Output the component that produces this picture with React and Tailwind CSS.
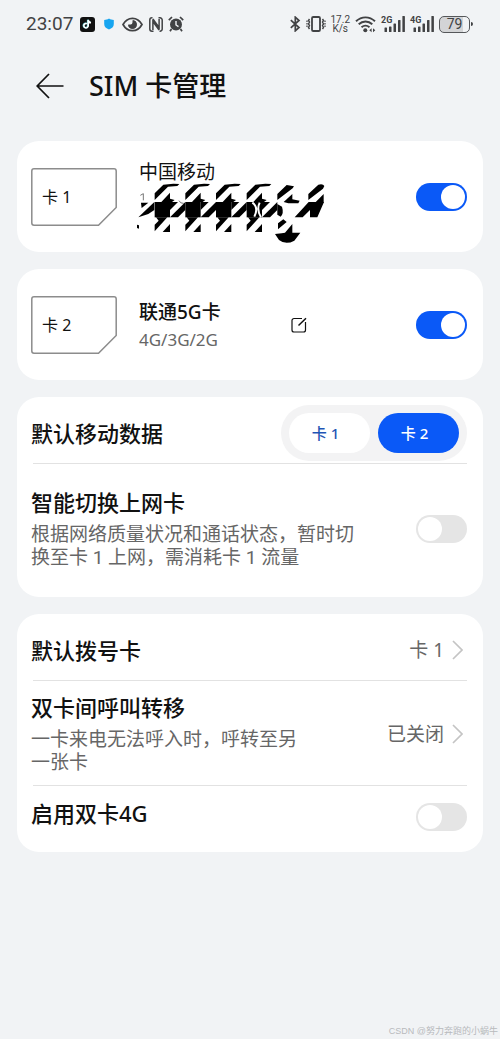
import React, { useState } from "react";

function Switch({ id, defaultChecked }) {
  return (
    <input
      id={id}
      type="checkbox"
      role="switch"
      defaultChecked={defaultChecked}
      className="block h-7 w-[51px] shrink-0 cursor-pointer appearance-none rounded-full bg-[#e5e5e5] p-[2px] before:block before:size-6 before:rounded-full before:bg-white checked:bg-[#0a59f7] checked:pl-[25px]"
    />
  );
}

function TikTokIcon() {
  return (
    <svg width="15" height="15" viewBox="0 0 15 15" aria-hidden="true">
      <rect width="15" height="15" rx="3" fill="#111" />
      <path d="M6.900 6.700A2.200 2.200 0 1 0 8.200 9.200V3c.3 1.500 1.300 2.500 2.800 2.700" fill="none" stroke="#5fd6dc" strokeWidth="1.600" transform="translate(-.5 -.3)" />
      <path d="M6.900 6.700A2.200 2.200 0 1 0 8.200 9.200V3c.3 1.500 1.300 2.500 2.800 2.700" fill="none" stroke="#fff" strokeWidth="1.600" />
    </svg>
  );
}

function ShieldIcon() {
  return (
    <svg width="10" height="12" viewBox="0 0 10 12" aria-hidden="true">
      <path d="M5 0.500C6.500 1.500 8 1.900 9.800 2v4C9.800 8.800 7.800 10.500 5 11.500 2.200 10.500.2 8.800.2 6V2C2 1.900 3.500 1.500 5 .5z" fill="#18a5f0" />
    </svg>
  );
}

function EyeIcon() {
  return (
    <svg width="21" height="15" viewBox="0 0 21 15" aria-hidden="true">
      <path d="M1 7.500C3.200 3.500 6.500 1.300 10.500 1.300s7.300 2.200 9.500 6.200c-2.200 4-5.500 6.200-9.500 6.200S3.200 11.500 1 7.500z" fill="none" stroke="#414244" strokeWidth="1.700" />
      <path d="M11 3.200a4.300 4.300 0 1 1-4.800 4.800l1.500.2a3 3 0 0 0 3.300-3.400z" fill="#414244" />
      <path d="M10.500 3.200a4.300 4.300 0 1 1-4.300 4.300h2.500a2 2 0 0 0 1.800-2z" fill="#414244" />
    </svg>
  );
}

function NfcIcon() {
  return (
    <svg width="14" height="15" viewBox="0 0 14 15" fill="none" stroke="#414244" aria-hidden="true">
      <path d="M3.500.8H3A2.200 2.200 0 0 0 .8 3v9A2.200 2.200 0 0 0 3 14.200h1.500M10.500 14.200h.5a2.200 2.200 0 0 0 2.200-2.200V3A2.200 2.200 0 0 0 11 .8H9.500" strokeWidth="1.500" />
      <path d="M3.900 13V4.500l6.200 8.500M10.100 2v8.500L3.900 2" strokeWidth="1.500" />
    </svg>
  );
}

function AlarmIcon() {
  return (
    <svg width="16" height="16" viewBox="0 0 16 16" aria-hidden="true">
      <circle cx="8" cy="8.500" r="6" fill="#414244" />
      <path d="M.8 4.200L4 1M15.200 4.200L12 1M3.500 13l-1.500 2.300M12.500 13l1.500 2.300" stroke="#414244" strokeWidth="1.700" />
      <path d="M8 5v4l2.500 1.700" fill="none" stroke="#f1f3f5" strokeWidth="1.400" />
    </svg>
  );
}

function BluetoothIcon() {
  return (
    <svg width="11" height="16" viewBox="0 0 11 16" fill="none" stroke="#414244" strokeWidth="1.700" aria-hidden="true">
      <path d="M.8 4.200l8.200 7.300-3.700 3.300V1.200L9 4.500.8 11.800" />
    </svg>
  );
}

function VibrateIcon() {
  return (
    <svg width="20" height="16" viewBox="0 0 20 16" fill="none" stroke="#414244" aria-hidden="true">
      <rect x="6" y="1" width="8" height="14" rx="1.300" strokeWidth="1.800" />
      <path d="M3.500 3l-1 1.500 1 1.500-1 2 1 1.500-1 2 1 1.500M16.500 3l1 1.500-1 1.500 1 2-1 1.500 1 2-1 1.500" strokeWidth="1.400" />
      <path d="M1 4.500v7M19 4.500v7" strokeWidth="1.200" strokeDasharray="1.500 1" />
    </svg>
  );
}

function WifiIcon() {
  return (
    <svg width="21" height="17" viewBox="0 0 21 17" fill="none" stroke="#414244" strokeWidth="1.900" aria-hidden="true">
      <path d="M1 5.300c5.500-5.300 13.500-5.300 19 0M3.700 8.300c4-3.700 9.600-3.700 13.600 0M6.500 11.300c2.500-2.100 5.500-2.100 8 0" />
      <circle cx="10.300" cy="14.300" r="2" fill="#414244" stroke="none" />
      <path d="M14.300 14.200l2.300-2v4zM20.300 14.200l-2.300-2v4z" fill="#414244" stroke="none" />
    </svg>
  );
}

function Signal({ label }) {
  return (
    <span className="relative block">
      <svg width="24" height="16" viewBox="0 0 24 16" fill="#414244" aria-hidden="true">
        <rect x="3.500" y="11.500" width="2.500" height="4.500" rx=".6" />
        <rect x="8" y="10.500" width="2.500" height="5.500" rx=".6" />
        <rect x="12.500" y="7.500" width="2.500" height="8.500" rx=".6" />
        <rect x="17" y="4" width="2.500" height="12" rx=".6" />
        <rect x="21.400" y="0" width="2.500" height="16" rx=".6" />
      </svg>
      <span className="absolute top-0 left-0 text-[9px] leading-[9px] font-bold">{label}</span>
    </span>
  );
}

function Battery() {
  return (
    <span className="flex items-center gap-px">
      <span className="flex h-[17px] w-[31px] items-center justify-center rounded-[5px] border border-[#55575a] bg-linear-to-r from-[#d3d4d6] from-78% to-[#f1f3f5] to-78% text-[14px] leading-[15px]">
        79
      </span>
      <span className="h-1 w-[2px] rounded-r-full bg-[#414244]" />
    </span>
  );
}

function SimOutline({ label }) {
  return (
    <div className="grid h-[58px] w-[86px] shrink-0 items-center">
      <svg className="col-start-1 row-start-1" width="86" height="58" viewBox="0 0 86 58" fill="none" aria-hidden="true">
        <path d="M3 .8h80a2.200 2.200 0 0 1 2.200 2.200v36.500L67.500 57.200H3A2.200 2.200 0 0 1 .8 55V3A2.200 2.200 0 0 1 3 .8z" stroke="#8c8c8c" strokeWidth="1.500" />
      </svg>
      <span className="col-start-1 row-start-1 pl-[11px] text-[16px] leading-5">{label}</span>
    </div>
  );
}

/* Houndstooth brush covering the phone number. */
function NumberMask() {
  const tiles = [75, 167, 259, 351];
  return (
    <svg width="190" height="62" viewBox="22 22 570 186" fill="#000" role="img" aria-label="号码已隐藏">
      <path d="M32 62l9-5v20M148 78q4 9 14 8M187 86l8-10" fill="none" stroke="#777" strokeWidth="3" />
      <path d="M22 150l6 2v10l-6-2z" />
      <path d="M34 84h22L36 100z" />
      <path d="M26 128L74 82v24l-18 12-30 10z" />
      {tiles.map((x) => (
        <g key={x} transform={`translate(${x} 0)`}>
          <path d="M0 76V56L26 30 56 27 74 28 68 34 40 36z" />
          <path d="M20 82L46 54v18l14 4-8 6z" />
          <path d="M0 82h46v46H0z" />
          <path d="M46 82h24L46 106z" />
          <path d="M46 128L92 82v24L70 128z" />
          <path d="M4 128h34L0 170V150l12-12z" />
          <path d="M24 172l22-24v24z" />
        </g>
      ))}
      <path d="M368 84q20 14 6 42M390 84q-10 20 4 44" fill="none" stroke="#fff" strokeWidth="6" />
      <path d="M443 76V58l28-27 22 4-4 6zM462 82l26-24v16l22 4-4 8h-30z" />
      <path d="M443 88l14 8q6 20-4 30l-10-6z" />
      <path d="M536 76V58l30-28q14-4 18 4l-4 8zM556 84l26-26v26z" />
      <path d="M495 128l42-46h46l-20 46h-22V106l-22 22z" />
      <path d="M445 164v-18l16-12 10 8zM466 174l22-26v26h24l-18 24q-26 14-46-2l-12-18 20-2z" />
    </svg>
  );
}

function Chevron() {
  return (
    <svg width="11" height="20" viewBox="0 0 11 20" fill="none" stroke="#c4c4c4" strokeWidth="1.700" aria-hidden="true">
      <path d="M1 1l9 9-9 9" />
    </svg>
  );
}

function Card({ children }) {
  return <section className="rounded-[22px] bg-white pr-4 pl-[14px]">{children}</section>;
}

function Divider() {
  return <hr className="ml-[2px] border-t border-[#e2e2e2]" />;
}

export default function App() {
  const [dataCard, setDataCard] = useState(2);
  return (
    <div className="flex min-h-screen flex-col bg-[#f1f3f5] font-['Noto_Sans','Noto_Sans_CJK_SC',sans-serif] text-[#111]">
      <div className="flex h-12 items-center justify-between pr-[27px] pl-[26px] font-[Roboto,sans-serif] text-[#414244]">
        <div className="flex items-center">
          <span className="w-[54px] text-[19px] leading-6">23:07</span>
          <TikTokIcon />
          <span className="mr-2 ml-[9px]"><ShieldIcon /></span>
          <EyeIcon />
          <span className="mr-[5px] ml-[6px]"><NfcIcon /></span>
          <AlarmIcon />
        </div>
        <div className="flex items-center gap-[5px]">
          <BluetoothIcon />
          <VibrateIcon />
          <span className="text-center text-[10px] leading-[9px]">
            17.2
            <br />
            K/s
          </span>
          <WifiIcon />
          <Signal label="2G" />
          <Signal label="4G" />
          <Battery />
        </div>
      </div>

      <header className="flex h-[76px] items-center gap-[25px] pl-9">
        <button type="button" aria-label="返回">
          <svg width="28" height="26" viewBox="0 0 28 26" fill="none" stroke="#111" strokeWidth="1.700" aria-hidden="true">
            <path d="M27.500 13H1.200M13 1L1.200 13 13 25" />
          </svg>
        </button>
        <h1 className="text-[27px] leading-9 font-medium">SIM 卡管理</h1>
      </header>

      <main className="flex flex-col gap-[17px] px-[17px] pt-[17px]">
        <Card>
          <div className="flex h-[111px] items-center">
            <SimOutline label="卡 1" />
            <div className="ml-[22px] flex-1 pt-3">
              <label htmlFor="sim1" className="block text-[19px] leading-5 whitespace-nowrap">中国移动</label>
              <div className="-ml-[2px]">
                <NumberMask />
              </div>
            </div>
            <Switch id="sim1" defaultChecked />
          </div>
        </Card>

        <Card>
          <div className="flex h-[111px] items-center">
            <SimOutline label="卡 2" />
            <div className="ml-[22px] w-[152px] pt-[3px]">
              <label htmlFor="sim2" className="block text-[19px] leading-7 font-medium">联通5G卡</label>
              <p className="text-[17px] leading-7 text-[#666]">4G/3G/2G</p>
            </div>
            <button type="button" aria-label="编辑">
              <svg width="16" height="16" viewBox="0 0 16 16" fill="none" stroke="#111" strokeWidth="1.200" aria-hidden="true">
                <path d="M11 1.500H3A2 2 0 0 0 1 3.500V13a2 2 0 0 0 2 2h9.500a2 2 0 0 0 2-2V5" />
                <path d="M7.500 8.500L15 1.200" strokeWidth="1.500" />
              </svg>
            </button>
            <div className="ml-auto">
              <Switch id="sim2" defaultChecked />
            </div>
          </div>
        </Card>

        <Card>
          <div className="flex items-center justify-between pt-2 pb-[2px]">
            <h2 className="text-[22px] leading-7 font-medium">默认移动数据</h2>
            <div role="group" aria-label="默认移动数据" className="flex gap-2 rounded-full bg-[#f3f3f4] p-2">
              {[1, 2].map((n) => (
                <button
                  key={n}
                  type="button"
                  aria-pressed={dataCard === n}
                  onClick={() => setDataCard(n)}
                  className="h-10 w-[81px] rounded-full bg-white pr-2 text-[15px] font-medium text-[#1f55b5] aria-pressed:bg-[#0a59f7] aria-pressed:text-white"
                >
                  卡 {n}
                </button>
              ))}
            </div>
          </div>
          <Divider />
          <div className="flex items-center justify-between pt-6 pb-7">
            <div className="w-[340px]">
              <label htmlFor="smart" className="block pb-[7px] text-[22px] leading-7 font-medium">智能切换上网卡</label>
              <p className="font-[Roboto,'Noto_Sans_CJK_SC',sans-serif] text-[19px] leading-[23px] text-[#666]">
                根据网络质量状况和通话状态，暂时切
                <br />
                换至卡 1 上网，需消耗卡 1 流量
              </p>
            </div>
            <Switch id="smart" />
          </div>
        </Card>

        <Card>
          <button type="button" className="flex h-[66px] w-full items-center justify-between pt-[6px] pr-1 text-left">
            <span className="text-[22px] leading-7 font-medium">默认拨号卡</span>
            <span className="flex items-center gap-2 text-[19px] leading-6 text-[#666]">
              卡 1
              <Chevron />
            </span>
          </button>
          <Divider />
          <button type="button" className="flex w-full items-center justify-between pt-3 pr-1 pb-[11px] text-left">
            <span>
              <span className="block pb-[7px] text-[22px] leading-7 font-medium">双卡间呼叫转移</span>
              <span className="block font-[Roboto,'Noto_Sans_CJK_SC',sans-serif] text-[19px] leading-[23px] text-[#666]">
                一卡来电无法呼入时，呼转至另
                <br />
                一张卡
              </span>
            </span>
            <span className="flex items-center gap-2 text-[19px] leading-6 text-[#666]">
              已关闭
              <Chevron />
            </span>
          </button>
          <Divider />
          <div className="flex h-[66px] items-center justify-between pb-[5px]">
            <label htmlFor="dual4g" className="pb-2 text-[22px] leading-7 font-medium">启用双卡4G</label>
            <Switch id="dual4g" />
          </div>
        </Card>
      </main>

      <footer className="mt-auto pr-[2px] pb-[2px] text-right font-['Liberation_Sans','Noto_Sans_CJK_SC',sans-serif] text-[9px] leading-3 text-[#b8babd]">
        CSDN @努力奔跑的小蜗牛
      </footer>
    </div>
  );
}
